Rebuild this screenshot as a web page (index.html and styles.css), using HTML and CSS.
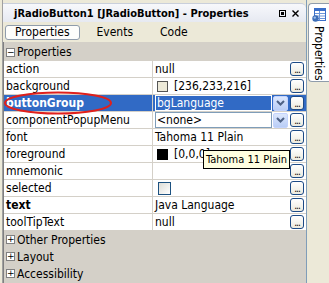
FILE: index.html
```html
<!DOCTYPE html>
<html>
<head>
<meta charset="utf-8">
<link rel="stylesheet" href="styles.css">
</head>
<body>
<div class="window">
  <div class="panel">
    <div class="titlebar">
      <span class="grip"></span>
      <span class="title">jRadioButton1 [JRadioButton] - Properties</span>
      <span class="ticons">
        <svg width="7" height="7" viewBox="0 0 7 7"><rect x="0.5" y="0.5" width="6" height="6" fill="none" stroke="#000"/><rect x="2" y="2" width="3" height="3" fill="#000"/></svg>
        <svg width="7" height="7" viewBox="0 0 7 7"><path d="M0.5 0.5 L6.5 6.5 M6.5 0.5 L0.5 6.5" stroke="#000" stroke-width="1.4"/></svg>
      </span>
    </div>
    <div class="tabs">
      <span class="tab active">Properties</span>
      <span class="tab">Events</span>
      <span class="tab">Code</span>
    </div>
    <div class="sheet">
      <div class="cat first"><span class="box">−</span>Properties</div>
      <div class="row"><div class="name">action</div><div class="val"><span class="txt">null</span><span class="dots">...</span></div></div>
      <div class="row"><div class="name">background</div><div class="val"><span class="swatch beige"></span><span class="txt">[236,233,216]</span><span class="dots">...</span></div></div>
      <div class="row sel"><div class="name bold">buttonGroup</div><div class="val"><span class="combo selcombo"><span class="seltext">bgLanguage</span></span><span class="arrow"><svg width="9" height="6" viewBox="0 0 9 6"><path d="M1 1 L4.5 4.5 L8 1" fill="none" stroke="#4d6185" stroke-width="2"/></svg></span><span class="dots">...</span></div></div>
      <div class="row"><div class="name">componentPopupMenu</div><div class="val"><span class="combo">&lt;none&gt;</span><span class="arrow"><svg width="9" height="6" viewBox="0 0 9 6"><path d="M1 1 L4.5 4.5 L8 1" fill="none" stroke="#4d6185" stroke-width="2"/></svg></span><span class="dots">...</span></div></div>
      <div class="row"><div class="name">font</div><div class="val"><span class="txt">Tahoma 11 Plain</span><span class="dots">...</span></div></div>
      <div class="row"><div class="name">foreground</div><div class="val"><span class="swatch black"></span><span class="txt">[0,0,0]</span><span class="dots">...</span></div></div>
      <div class="row"><div class="name">mnemonic</div><div class="val"><span class="txt"></span><span class="dots">...</span></div></div>
      <div class="row"><div class="name">selected</div><div class="val"><span class="check"></span><span class="txt"></span><span class="dots">...</span></div></div>
      <div class="row"><div class="name bold">text</div><div class="val"><span class="txt">Java Language</span><span class="dots">...</span></div></div>
      <div class="row"><div class="name">toolTipText</div><div class="val"><span class="txt">null</span><span class="dots">...</span></div></div>
      <div class="cat"><span class="box">+</span>Other Properties</div>
      <div class="cat"><span class="box">+</span>Layout</div>
      <div class="cat"><span class="box">+</span>Accessibility</div>
    </div>
    <svg class="ring" width="110" height="24" viewBox="0 0 110 24"><ellipse cx="55" cy="12" rx="53" ry="10.5" fill="none" stroke="#e0201c" stroke-width="2"/></svg>
    <div class="tooltip">Tahoma 11 Plain</div>
  </div>
  <div class="sidebar">
    <div class="sidetab">
      <svg width="14" height="14" viewBox="0 0 14 14">
        <rect x="2.5" y="0.5" width="11" height="12" fill="#fff" stroke="#3a6fc9"/>
        <rect x="3" y="1" width="10" height="2" fill="#3a6fc9"/>
        <path d="M3 5.5 H13 M3 8 H13 M3 10.5 H13 M7.5 3 V12.5" stroke="#6b95d8" stroke-width="1"/>
        <circle cx="3.5" cy="10.5" r="3.2" fill="#3f6fb8"/>
        <circle cx="2.8" cy="9.6" r="1.2" fill="#9fc0ec"/>
      </svg>
      <span class="vtext">Properties</span>
    </div>
  </div>
</div>
</body>
</html>
```
FILE: styles.css
```css
* { box-sizing: border-box; }
html, body { margin: 0; padding: 0; }
body {
  width: 329px;
  height: 283px;
  overflow: hidden;
  background: #ece9d8;
  font-family: "DejaVu Sans Condensed", "Liberation Sans", sans-serif;
  font-size: 11px;
  color: #000;
}
.window {
  display: flex;
  height: 283px;
}
.panel {
  position: relative;
  width: 305px;
  margin-left: 2px;
  border-left: 1px solid #a0a0a0;
  border-right: 1px solid #7f9db9;
  display: flex;
  flex-direction: column;
}
.titlebar {
  margin-top: 3px;
  height: 19px;
  display: flex;
  align-items: center;
  background: linear-gradient(#f7f8fb, #e6e9f1);
  border-top: 1px solid #c9cfdb;
  border-top-right-radius: 5px;
  padding-left: 3px;
}
.grip {
  width: 4px;
  height: 11px;
  margin-right: 4px;
  background-image: radial-gradient(#8d98ae 45%, transparent 50%);
  background-size: 2px 2px;
}
.title {
  font-weight: bold;
  font-size: 11px;
  flex: 1;
  white-space: nowrap;
}
.ticons {
  display: flex;
  gap: 6px;
  margin-right: 7px;
  align-items: center;
}
.ticons svg { display: block; }
.tabs {
  height: 20px;
  display: flex;
  align-items: center;
  padding-left: 2px;
  background: #ece9d8;
}
.tab {
  height: 15px;
  line-height: 13px;
  padding: 0 9px;
  margin-right: 7px;
  border: 1px solid transparent;
  font-size: 12px;
}
.tab.active {
  background: #fdfdfb;
  border-color: #8f9cab;
  border-radius: 3px;
}
.sheet {
  flex: 1;
  background: #d4d0c8;
  border-left: 1px solid #808080;
  padding-top: 1px;
}
.cat {
  height: 17px;
  display: flex;
  align-items: center;
  padding-left: 2px;
  font-size: 12px;
}
.cat.first { height: 18px; }
.box {
  width: 9px;
  height: 9px;
  border: 1px solid #808080;
  background: #fff;
  font-size: 9px;
  line-height: 7px;
  text-align: center;
  margin-right: 2px;
  font-family: "DejaVu Sans", sans-serif;
}
.row {
  display: flex;
  height: 17px;
  background: #fff;
  border-bottom: 1px solid #d4d0c8;
}
.name {
  width: 149px;
  border-right: 1px solid #d4d0c8;
  padding-left: 2px;
  line-height: 16px;
  font-size: 12px;
  white-space: nowrap;
  overflow: hidden;
}
.bold { font-weight: bold; }
.val {
  flex: 1;
  display: flex;
  align-items: center;
  padding-left: 2px;
  padding-right: 2px;
  font-size: 12px;
}
.txt { flex: 1; white-space: nowrap; }
.row.sel .name { background: #316ac5; color: #fff; }
.row.sel .val { background: #316ac5; }
.combo {
  flex: 1;
  height: 16px;
  line-height: 14px;
  border: 1px solid #7f9db9;
  padding-left: 1px;
  background: #fff;
}
.selcombo {
  background: #316ac5;
  border-color: #fff;
}
.seltext { color: #fff; }
.arrow {
  width: 15px;
  height: 15px;
  background: linear-gradient(#dce7fd, #b9cdf6);
  border: 1px solid #c3d3fd;
  border-radius: 2px;
  display: flex;
  align-items: center;
  justify-content: center;
  margin-left: 1px;
}
.arrow svg { display: block; }
.dots {
  width: 14px;
  height: 14px;
  margin-left: 2px;
  border: 1px solid #1c4a86;
  border-radius: 3px;
  background: linear-gradient(#ffffff, #eceadf);
  font-size: 10px;
  line-height: 14px;
  text-align: center;
  letter-spacing: -1px;
}
.swatch {
  width: 11px;
  height: 11px;
  border: 1px solid #000;
  margin: 0 6px 0 2px;
}
.swatch.beige { background: #ece9d8; border-color: #555; }
.swatch.black { background: #000; }
.check {
  width: 13px;
  height: 13px;
  border: 1px solid #1c5180;
  background: linear-gradient(135deg, #dcdcd6, #fff);
  margin-left: 3px;
}
.ring {
  position: absolute;
  left: 0;
  top: 91px;
}
.tooltip {
  position: absolute;
  left: 200px;
  top: 150px;
  height: 19px;
  padding: 0 2px;
  line-height: 17px;
  background: #ffffe1;
  border: 1px solid #000;
  font-size: 11px;
  white-space: nowrap;
}
.sidebar {
  flex: 1;
  padding-top: 3px;
}
.sidetab {
  margin-left: 1px;
  height: 79px;
  background: #fff;
  border: 1px solid #8f9cab;
  border-right: none;
  border-radius: 4px 0 0 4px;
  display: flex;
  flex-direction: column;
  align-items: center;
  padding-top: 4px;
}
.vtext {
  writing-mode: vertical-rl;
  margin-top: 4px;
  font-size: 12px;
}
```
